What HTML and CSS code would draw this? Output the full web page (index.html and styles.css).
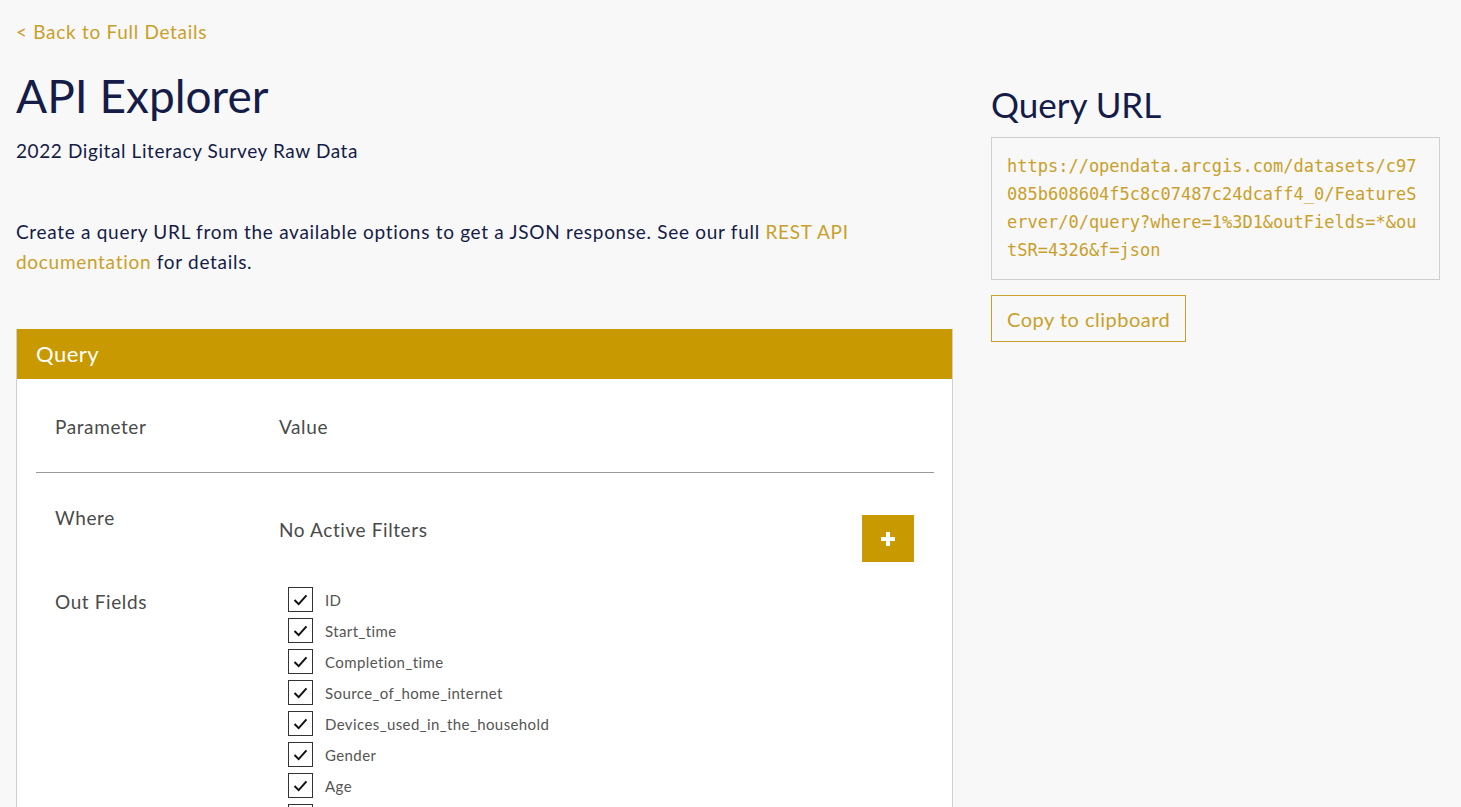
FILE: index.html
```html
<!DOCTYPE html>
<html lang="en">
<head>
<meta charset="utf-8">
<title>API Explorer</title>
<link rel="stylesheet" href="styles.css">
</head>
<body>
<div class="page">
  <main class="main">
    <a class="back" href="#">&lt; Back to Full Details</a>
    <h1 class="title">API Explorer</h1>
    <p class="subtitle">2022 Digital Literacy Survey Raw Data</p>
    <p class="intro">Create a query URL from the available options to get a JSON response. See our full <a href="#">REST API documentation</a> for details.</p>

    <section class="panel">
      <div class="panel-head">Query</div>
      <div class="panel-body">
        <div class="row row-head">
          <div class="param">Parameter</div>
          <div class="value">Value</div>
        </div>
        <div class="row row-where">
          <div class="param">Where</div>
          <div class="value value-where">
            <span class="filters">No Active Filters</span>
            <button class="add" type="button" aria-label="Add filter">
              <svg width="18" height="18" viewBox="0 0 18 18"><path d="M7 2h4v5h5v4h-5v5H7v-5H2V7h5z" fill="#fff"/></svg>
            </button>
          </div>
        </div>
        <div class="row row-fields">
          <div class="param param-fields">Out Fields</div>
          <ul class="value fields">
            <li class="field"><span class="box"><svg viewBox="0 0 25 25"><path d="M6 13l4.5 4.5L19 8" fill="none" stroke="#111" stroke-width="2.2"/></svg></span>ID</li>
            <li class="field"><span class="box"><svg viewBox="0 0 25 25"><path d="M6 13l4.5 4.5L19 8" fill="none" stroke="#111" stroke-width="2.2"/></svg></span>Start_time</li>
            <li class="field"><span class="box"><svg viewBox="0 0 25 25"><path d="M6 13l4.5 4.5L19 8" fill="none" stroke="#111" stroke-width="2.2"/></svg></span>Completion_time</li>
            <li class="field"><span class="box"><svg viewBox="0 0 25 25"><path d="M6 13l4.5 4.5L19 8" fill="none" stroke="#111" stroke-width="2.2"/></svg></span>Source_of_home_internet</li>
            <li class="field"><span class="box"><svg viewBox="0 0 25 25"><path d="M6 13l4.5 4.5L19 8" fill="none" stroke="#111" stroke-width="2.2"/></svg></span>Devices_used_in_the_household</li>
            <li class="field"><span class="box"><svg viewBox="0 0 25 25"><path d="M6 13l4.5 4.5L19 8" fill="none" stroke="#111" stroke-width="2.2"/></svg></span>Gender</li>
            <li class="field"><span class="box"><svg viewBox="0 0 25 25"><path d="M6 13l4.5 4.5L19 8" fill="none" stroke="#111" stroke-width="2.2"/></svg></span>Age</li>
            <li class="field"><span class="box"><svg viewBox="0 0 25 25"><path d="M6 13l4.5 4.5L19 8" fill="none" stroke="#111" stroke-width="2.2"/></svg></span>Education</li>
          </ul>
        </div>
      </div>
    </section>
  </main>

  <aside class="side">
    <h2 class="side-title">Query URL</h2>
    <div class="url">https://opendata.arcgis.com/datasets/c97085b608604f5c8c07487c24dcaff4_0/FeatureServer/0/query?where=1%3D1&amp;outFields=*&amp;outSR=4326&amp;f=json</div>
    <button class="copy" type="button">Copy to clipboard</button>
  </aside>
</div>
</body>
</html>
```

FILE: styles.css
```css
html, body {
  margin: 0;
  padding: 0;
}
body {
  background: #f8f8f8;
  font-family: Lato, "Open Sans", Arial, sans-serif;
  color: #151c47;
  height: 807px;
  overflow: hidden;
}
.page {
  display: grid;
  grid-template-columns: 937px 449px;
  column-gap: 38px;
  padding: 0 21px 0 16px;
}
.main {
  display: flex;
  flex-direction: column;
  align-items: flex-start;
}
a {
  color: #c9a02a;
  text-decoration: none;
}
.back {
  margin-top: 20px;
  font-size: 19px;
  line-height: 24px;
  letter-spacing: 0.7px;
}
.title {
  margin: 24px 0 0;
  font-size: 46px;
  line-height: 56px;
  font-weight: 400;
  color: #151c47;
}
.subtitle {
  margin: 14px 0 0;
  font-size: 19px;
  line-height: 26px;
  letter-spacing: 0.6px;
}
.intro {
  margin: 53px 0 0;
  font-size: 19px;
  line-height: 30px;
  letter-spacing: 0.7px;
}
.panel {
  align-self: stretch;
  margin-top: 52px;
  border: 1px solid #cfcfcf;
  border-top: none;
  background: #fff;
  min-height: 600px;
}
.panel-head {
  background: #c89900;
  color: #fff;
  font-size: 22px;
  line-height: 50px;
  padding: 0 19px;
  letter-spacing: 0.5px;
}
.panel-body {
  padding: 0 18px 0 19px;
}
.row {
  display: grid;
  grid-template-columns: 224px 1fr;
  padding: 0 20px 0 19px;
  font-size: 19px;
  line-height: 24px;
  letter-spacing: 0.6px;
  color: #4a4a4a;
}
.row-head {
  padding-top: 36px;
  padding-bottom: 33px;
  border-bottom: 1px solid #999;
}
.row-where {
  padding-top: 33px;
}
.value-where {
  display: flex;
  justify-content: space-between;
  align-items: flex-start;
}
.filters {
  margin-top: 12px;
}
.add {
  width: 52px;
  height: 47px;
  margin-top: 9px;
  border: none;
  background: #c89900;
  padding: 0;
  display: flex;
  align-items: center;
  justify-content: center;
}
.row-fields {
  padding-top: 20px;
}
.param-fields {
  margin-top: 8px;
}
.fields {
  list-style: none;
  margin: 0;
  padding: 2px 0 0 9px;
}
.field {
  display: flex;
  align-items: center;
  height: 31px;
  font-size: 15px;
  letter-spacing: 0.4px;
  color: #555;
}
.box {
  width: 23px;
  height: 23px;
  border: 1px solid #333;
  background: #fff;
  margin-right: 12px;
  flex: none;
}
.box svg {
  display: block;
  width: 23px;
  height: 23px;
}
.side {
  display: flex;
  flex-direction: column;
  align-items: flex-start;
}
.side-title {
  margin: 82px 0 0;
  font-size: 35px;
  line-height: 44px;
  font-weight: 400;
  color: #151c47;
}
.url {
  align-self: stretch;
  margin-top: 11px;
  border: 1px solid #cfcfcf;
  padding: 14px 16px 15px 15px;
  font-family: "DejaVu Sans Mono", "Liberation Mono", monospace;
  font-size: 17px;
  line-height: 28px;
  color: #c9a02a;
  word-break: break-all;
}
.copy {
  margin-top: 15px;
  height: 47px;
  padding: 0 15px;
  border: 1px solid #c9a02a;
  background: transparent;
  color: #c9a02a;
  font-family: Lato, "Open Sans", Arial, sans-serif;
  font-size: 20px;
  letter-spacing: 0.5px;
}
```
